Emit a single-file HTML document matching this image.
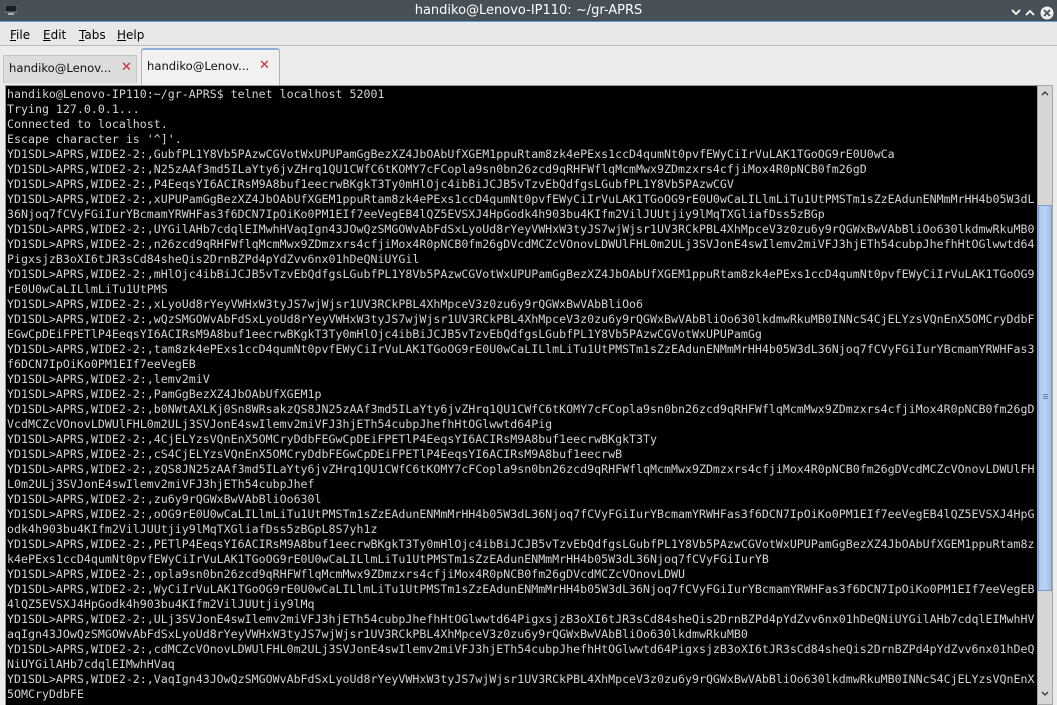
<!DOCTYPE html>
<html><head><meta charset="utf-8"><style>
*{margin:0;padding:0;box-sizing:border-box}
body{width:1057px;height:705px;overflow:hidden;background:#edecea;font-family:"DejaVu Sans","Liberation Sans",sans-serif;position:relative}
#title{position:absolute;left:0;top:0;width:1057px;height:22px;background:#475057;border-bottom:1px solid #5b9ad8;color:#fff;font-size:13px;text-align:center;line-height:22px}
#menu{position:absolute;left:0;top:23px;width:1057px;height:23px;background:#e8e8e7;border-bottom:1px solid #bdbdbb;font-size:12px;line-height:24px}
#menu span{position:absolute;top:0}
#menu u{text-decoration:underline}
.tab{position:absolute;font-size:11.6px;color:#111}
.tab .x{position:absolute;color:#d8282e;font-weight:bold;font-size:13px}
#term{position:absolute;left:5px;top:85px;width:1032px;height:620px;background:#000;border-left:1px solid #999;border-top:1px solid #999}
pre{position:absolute;left:1px;top:1px;font-family:"DejaVu Sans Mono",monospace;font-size:11.62px;line-height:15px;color:#d3d3d3}
#sb{position:absolute;left:1037px;top:85px;width:16px;height:620px;background:#d6d6d4;border:1px solid #a6a6a4}
#thumb{position:absolute;left:0;top:119px;width:14px;height:386px;background:linear-gradient(90deg,#a9c6ea,#bcd3ef 50%,#9ebee6);border:1px solid #7a9fcf}
</style></head><body>
<div id="title">handiko@Lenovo-IP110: ~/gr-APRS
<svg style="position:absolute;left:5px;top:5px" width="12" height="10"><rect x="0" y="0" width="12" height="7" fill="#1c1f22" stroke="#aab" stroke-width="0.7"/><rect x="3" y="8" width="6" height="2" fill="#aab"/></svg>
<svg style="position:absolute;left:1010px;top:6px" width="45" height="14"><path d="M2 4l4 4 4-4" stroke="#fff" stroke-width="1.8" fill="none"/><path d="M16 9l4-4 4 4" stroke="#fff" stroke-width="1.8" fill="none"/><circle cx="37" cy="7" r="6.5" fill="#eee"/><path d="M34 4l6 6M40 4l-6 6" stroke="#475057" stroke-width="1.8"/></svg>
</div>
<div id="menu"><span style="left:10px"><u>F</u>ile</span><span style="left:43px"><u>E</u>dit</span><span style="left:79px"><u>T</u>abs</span><span style="left:117px"><u>H</u>elp</span></div>
<div class="tab" style="left:3px;top:55px;width:134px;height:28px;background:#dcdcda;border:1px solid #c4c4c2;border-bottom:none"><span style="position:absolute;left:5px;top:5px">handiko@Lenov...</span><span class="x" style="left:117px;top:4px">✕</span></div>
<div class="tab" style="left:141px;top:48px;width:139px;height:37px;background:#f1f1f0;border:1px solid #a8b4c4;border-top:2px solid #8fb0dc;border-radius:3px 3px 0 0;border-bottom:none"><span style="position:absolute;left:5px;top:9px">handiko@Lenov...</span><span class="x" style="left:117px;top:8px">✕</span></div>
<div id="term"><pre>handiko@Lenovo-IP110:~/gr-APRS$ telnet localhost 52001
Trying 127.0.0.1...
Connected to localhost.
Escape character is '^]'.
YD1SDL>APRS,WIDE2-2:,GubfPL1Y8Vb5PAzwCGVotWxUPUPamGgBezXZ4JbOAbUfXGEM1ppuRtam8zk4ePExs1ccD4qumNt0pvfEWyCiIrVuLAK1TGoOG9rE0U0wCa
YD1SDL>APRS,WIDE2-2:,N25zAAf3md5ILaYty6jvZHrq1QU1CWfC6tKOMY7cFCopla9sn0bn26zcd9qRHFWflqMcmMwx9ZDmzxrs4cfjiMox4R0pNCB0fm26gD
YD1SDL>APRS,WIDE2-2:,P4EeqsYI6ACIRsM9A8buf1eecrwBKgkT3Ty0mHlOjc4ibBiJCJB5vTzvEbQdfgsLGubfPL1Y8Vb5PAzwCGV
YD1SDL>APRS,WIDE2-2:,xUPUPamGgBezXZ4JbOAbUfXGEM1ppuRtam8zk4ePExs1ccD4qumNt0pvfEWyCiIrVuLAK1TGoOG9rE0U0wCaLILlmLiTu1UtPMSTm1sZzEAdunENMmMrHH4b05W3dL
36Njoq7fCVyFGiIurYBcmamYRWHFas3f6DCN7IpOiKo0PM1EIf7eeVegEB4lQZ5EVSXJ4HpGodk4h903bu4KIfm2VilJUUtjiy9lMqTXGliafDss5zBGp
YD1SDL>APRS,WIDE2-2:,UYGilAHb7cdqlEIMwhHVaqIgn43JOwQzSMGOWvAbFdSxLyoUd8rYeyVWHxW3tyJS7wjWjsr1UV3RCkPBL4XhMpceV3z0zu6y9rQGWxBwVAbBliOo630lkdmwRkuMB0
YD1SDL>APRS,WIDE2-2:,n26zcd9qRHFWflqMcmMwx9ZDmzxrs4cfjiMox4R0pNCB0fm26gDVcdMCZcVOnovLDWUlFHL0m2ULj3SVJonE4swIlemv2miVFJ3hjETh54cubpJhefhHtOGlwwtd64
PigxsjzB3oXI6tJR3sCd84sheQis2DrnBZPd4pYdZvv6nx01hDeQNiUYGil
YD1SDL>APRS,WIDE2-2:,mHlOjc4ibBiJCJB5vTzvEbQdfgsLGubfPL1Y8Vb5PAzwCGVotWxUPUPamGgBezXZ4JbOAbUfXGEM1ppuRtam8zk4ePExs1ccD4qumNt0pvfEWyCiIrVuLAK1TGoOG9
rE0U0wCaLILlmLiTu1UtPMS
YD1SDL>APRS,WIDE2-2:,xLyoUd8rYeyVWHxW3tyJS7wjWjsr1UV3RCkPBL4XhMpceV3z0zu6y9rQGWxBwVAbBliOo6
YD1SDL>APRS,WIDE2-2:,wQzSMGOWvAbFdSxLyoUd8rYeyVWHxW3tyJS7wjWjsr1UV3RCkPBL4XhMpceV3z0zu6y9rQGWxBwVAbBliOo630lkdmwRkuMB0INNcS4CjELYzsVQnEnX5OMCryDdbF
EGwCpDEiFPETlP4EeqsYI6ACIRsM9A8buf1eecrwBKgkT3Ty0mHlOjc4ibBiJCJB5vTzvEbQdfgsLGubfPL1Y8Vb5PAzwCGVotWxUPUPamGg
YD1SDL>APRS,WIDE2-2:,tam8zk4ePExs1ccD4qumNt0pvfEWyCiIrVuLAK1TGoOG9rE0U0wCaLILlmLiTu1UtPMSTm1sZzEAdunENMmMrHH4b05W3dL36Njoq7fCVyFGiIurYBcmamYRWHFas3
f6DCN7IpOiKo0PM1EIf7eeVegEB
YD1SDL>APRS,WIDE2-2:,lemv2miV
YD1SDL>APRS,WIDE2-2:,PamGgBezXZ4JbOAbUfXGEM1p
YD1SDL>APRS,WIDE2-2:,b0NWtAXLKj0Sn8WRsakzQS8JN25zAAf3md5ILaYty6jvZHrq1QU1CWfC6tKOMY7cFCopla9sn0bn26zcd9qRHFWflqMcmMwx9ZDmzxrs4cfjiMox4R0pNCB0fm26gD
VcdMCZcVOnovLDWUlFHL0m2ULj3SVJonE4swIlemv2miVFJ3hjETh54cubpJhefhHtOGlwwtd64Pig
YD1SDL>APRS,WIDE2-2:,4CjELYzsVQnEnX5OMCryDdbFEGwCpDEiFPETlP4EeqsYI6ACIRsM9A8buf1eecrwBKgkT3Ty
YD1SDL>APRS,WIDE2-2:,cS4CjELYzsVQnEnX5OMCryDdbFEGwCpDEiFPETlP4EeqsYI6ACIRsM9A8buf1eecrwB
YD1SDL>APRS,WIDE2-2:,zQS8JN25zAAf3md5ILaYty6jvZHrq1QU1CWfC6tKOMY7cFCopla9sn0bn26zcd9qRHFWflqMcmMwx9ZDmzxrs4cfjiMox4R0pNCB0fm26gDVcdMCZcVOnovLDWUlFH
L0m2ULj3SVJonE4swIlemv2miVFJ3hjETh54cubpJhef
YD1SDL>APRS,WIDE2-2:,zu6y9rQGWxBwVAbBliOo630l
YD1SDL>APRS,WIDE2-2:,oOG9rE0U0wCaLILlmLiTu1UtPMSTm1sZzEAdunENMmMrHH4b05W3dL36Njoq7fCVyFGiIurYBcmamYRWHFas3f6DCN7IpOiKo0PM1EIf7eeVegEB4lQZ5EVSXJ4HpG
odk4h903bu4KIfm2VilJUUtjiy9lMqTXGliafDss5zBGpL8S7yh1z
YD1SDL>APRS,WIDE2-2:,PETlP4EeqsYI6ACIRsM9A8buf1eecrwBKgkT3Ty0mHlOjc4ibBiJCJB5vTzvEbQdfgsLGubfPL1Y8Vb5PAzwCGVotWxUPUPamGgBezXZ4JbOAbUfXGEM1ppuRtam8z
k4ePExs1ccD4qumNt0pvfEWyCiIrVuLAK1TGoOG9rE0U0wCaLILlmLiTu1UtPMSTm1sZzEAdunENMmMrHH4b05W3dL36Njoq7fCVyFGiIurYB
YD1SDL>APRS,WIDE2-2:,opla9sn0bn26zcd9qRHFWflqMcmMwx9ZDmzxrs4cfjiMox4R0pNCB0fm26gDVcdMCZcVOnovLDWU
YD1SDL>APRS,WIDE2-2:,WyCiIrVuLAK1TGoOG9rE0U0wCaLILlmLiTu1UtPMSTm1sZzEAdunENMmMrHH4b05W3dL36Njoq7fCVyFGiIurYBcmamYRWHFas3f6DCN7IpOiKo0PM1EIf7eeVegEB
4lQZ5EVSXJ4HpGodk4h903bu4KIfm2VilJUUtjiy9lMq
YD1SDL>APRS,WIDE2-2:,ULj3SVJonE4swIlemv2miVFJ3hjETh54cubpJhefhHtOGlwwtd64PigxsjzB3oXI6tJR3sCd84sheQis2DrnBZPd4pYdZvv6nx01hDeQNiUYGilAHb7cdqlEIMwhHV
aqIgn43JOwQzSMGOWvAbFdSxLyoUd8rYeyVWHxW3tyJS7wjWjsr1UV3RCkPBL4XhMpceV3z0zu6y9rQGWxBwVAbBliOo630lkdmwRkuMB0
YD1SDL>APRS,WIDE2-2:,cdMCZcVOnovLDWUlFHL0m2ULj3SVJonE4swIlemv2miVFJ3hjETh54cubpJhefhHtOGlwwtd64PigxsjzB3oXI6tJR3sCd84sheQis2DrnBZPd4pYdZvv6nx01hDeQ
NiUYGilAHb7cdqlEIMwhHVaq
YD1SDL>APRS,WIDE2-2:,VaqIgn43JOwQzSMGOWvAbFdSxLyoUd8rYeyVWHxW3tyJS7wjWjsr1UV3RCkPBL4XhMpceV3z0zu6y9rQGWxBwVAbBliOo630lkdmwRkuMB0INNcS4CjELYzsVQnEnX
5OMCryDdbFE</pre></div>
<div id="sb">
<svg style="position:absolute;left:2px;top:3px" width="10" height="8"><path d="M2 6l3-3 3 3" stroke="#333" stroke-width="1.3" fill="none"/></svg>
<div id="thumb"><div style="position:absolute;left:4px;top:188px;width:5px;height:1px;background:#5d7fae;box-shadow:0 2px #5d7fae,0 4px #5d7fae"></div></div>
<svg style="position:absolute;left:2px;top:604px" width="10" height="8"><path d="M2 2l3 3 3-3" stroke="#333" stroke-width="1.3" fill="none"/></svg>
</div>
</body></html>
